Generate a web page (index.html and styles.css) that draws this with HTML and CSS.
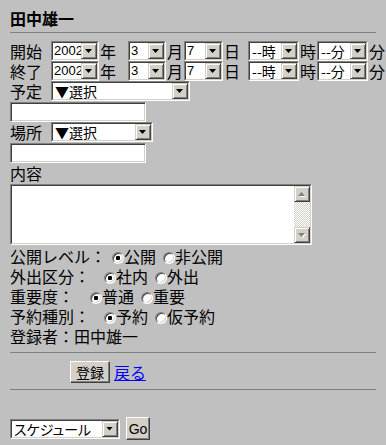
FILE: index.html
```
<!DOCTYPE html>
<html lang="ja">
<head>
<meta charset="utf-8">
<title>スケジュール登録</title>
<link rel="stylesheet" href="styles.css">
</head>
<body>

<h1 class="name">田中雄一</h1>
<hr>

<form>
<div class="row">
	<span>開始</span>
	<span class="dd yr"><select><option>2002</option></select></span><span class="u">年</span>
	<span class="dd mo"><select><option>3</option></select></span><span class="u">月</span>
	<span class="dd dy"><select><option>7</option></select></span><span class="u">日</span>
	<span class="dd hh"><select><option>--時</option></select></span><span class="u">時</span>
	<span class="dd mi"><select><option>--分</option></select></span><span class="u">分</span>
</div>
<div class="row">
	<span>終了</span>
	<span class="dd yr"><select><option>2002</option></select></span><span class="u">年</span>
	<span class="dd mo"><select><option>3</option></select></span><span class="u">月</span>
	<span class="dd dy"><select><option>7</option></select></span><span class="u">日</span>
	<span class="dd hh"><select><option>--時</option></select></span><span class="u">時</span>
	<span class="dd mi"><select><option>--分</option></select></span><span class="u">分</span>
</div>

<div class="row">
	<span>予定</span>
	<span class="dd plan"><select><option>▼選択</option></select></span>
</div>
<input type="text" class="txt">

<div class="row">
	<span>場所</span>
	<span class="dd place"><select><option>▼選択</option></select></span>
</div>
<input type="text" class="txt">

<div class="line">内容</div>
<div class="memo">
	<div class="memo-in">
		<textarea></textarea>
		<div class="sb">
			<div class="sb-btn up"></div>
			<div class="sb-fill"></div>
			<div class="sb-btn down"></div>
		</div>
	</div>
</div>

<div class="line">公開レベル：<input type="radio" name="lv" class="rd r6" checked>公開<input type="radio" name="lv" class="rd">非公開</div>
<div class="line">外出区分：<input type="radio" name="go" class="rd r14" checked>社内<input type="radio" name="go" class="rd">外出</div>
<div class="line">重要度：<input type="radio" name="imp" class="rd r16" checked>普通<input type="radio" name="imp" class="rd">重要</div>
<div class="line">予約種別：<input type="radio" name="kind" class="rd r14" checked>予約<input type="radio" name="kind" class="rd">仮予約</div>
<div class="line">登録者：田中雄一</div>

<hr class="sep">
<div class="act">
	<button type="button" class="btn save">登録</button>
	<a href="#" class="back">戻る</a>
</div>
<hr class="sep">

<div class="jump">
	<span class="dd sched"><select><option>スケジュール</option></select></span>
	<button type="button" class="btn go">Go</button>
</div>
</form>

</body>
</html>
```
FILE: styles.css
```
body{
	margin:0;
	padding:8px 10px 0;
	background:#c0c0c0;
	color:#000;
	font:16px/20px "Noto Sans CJK JP", sans-serif;
}
.name{
	margin:0;
	font-size:16px;
	line-height:20px;
	font-weight:bold;
}
hr{
	border:0;
	border-top:1px solid #808080;
	height:0;
	margin:4px 0 8px;
}
hr.sep{
	margin:6px 0 8px;
}

/* date / select rows */
.row{
	display:flex;
	align-items:center;
	height:20px;
	white-space:nowrap;
}
.row > *{
	flex-shrink:0;
}
.u{
	margin-left:1px;
}
.dd{
	position:relative;
	display:inline-block;
	height:20px;
	box-sizing:border-box;
	border:1px solid;
	border-color:#808080 #fff #fff #808080;
	vertical-align:top;
}
.dd select{
	-webkit-appearance:none;
	appearance:none;
	display:block;
	width:100%;
	height:100%;
	box-sizing:border-box;
	margin:0;
	padding:0 0 0 2px;
	border:1px solid;
	border-color:#404040 #d4d0c8 #d4d0c8 #404040;
	border-radius:0;
	background:#fff;
	color:#000;
	font:14px/16px "Noto Sans CJK JP", sans-serif;
	outline:none;
}
.yr select,
.mo select,
.dy select{
	padding-left:1px;
	font:13px/16px "Liberation Sans", sans-serif;
}
.dd::after{
	content:"";
	position:absolute;
	top:1px;
	right:1px;
	width:16px;
	height:16px;
	box-sizing:border-box;
	background:#d4d0c8;
	border:1px solid;
	border-color:#d4d0c8 #404040 #404040 #d4d0c8;
	box-shadow:inset 1px 1px #fff, inset -1px -1px #808080;
	pointer-events:none;
}
.dd::before{
	content:"";
	position:absolute;
	z-index:1;
	top:7px;
	right:6px;
	width:7px;
	height:4px;
	background:#000;
	clip-path:polygon(0 0,100% 0,50% 100%);
	pointer-events:none;
}
.yr{ width:48px; margin-left:9px; }
.mo{ width:38px; margin-left:12px; }
.dy{ width:39px; margin-left:1px; }
.hh{ width:51px; margin-left:8px; }
.mi{ width:51px; margin-left:1px; }
.plan{ width:139px; margin-left:9px; }
.place{ width:102px; margin-left:9px; }
.sched{ width:110px; }
.sched select{
	font-feature-settings:"palt";
}

.txt{
	display:block;
	width:136px;
	height:20px;
	box-sizing:border-box;
	margin:1px 0 0;
	padding:0 2px;
	border:1px solid;
	border-color:#808080 #fff #fff #808080;
	box-shadow:inset 1px 1px #404040, inset -1px -1px #d4d0c8;
	background:#fff;
	outline:none;
}

.line{
	height:20px;
	white-space:nowrap;
}

/* textarea with old scrollbar */
.memo{
	width:302px;
	height:61px;
	box-sizing:border-box;
	border:1px solid;
	border-color:#808080 #fff #fff #808080;
	margin-top:1px;
	margin-bottom:1px;
}
.memo-in{
	display:flex;
	height:100%;
	box-sizing:border-box;
	border:1px solid;
	border-color:#404040 #d4d0c8 #d4d0c8 #404040;
	background:#fff;
}
.memo textarea{
	flex:1;
	margin:0;
	padding:1px 2px;
	border:0;
	resize:none;
	outline:none;
	font:14px "Noto Sans CJK JP", sans-serif;
}
.sb{
	width:16px;
	display:flex;
	flex-direction:column;
	background:repeating-conic-gradient(#d4d0c8 0 25%, #fff 0 50%) 0 0/2px 2px;
}
.sb-fill{
	flex:1;
}
.sb-btn{
	position:relative;
	height:16px;
	box-sizing:border-box;
	background:#d4d0c8;
	border:1px solid;
	border-color:#d4d0c8 #404040 #404040 #d4d0c8;
	box-shadow:inset 1px 1px #fff, inset -1px -1px #808080;
}
.sb-btn::before,
.sb-btn::after{
	content:"";
	position:absolute;
	left:3px;
	top:5px;
	width:7px;
	height:4px;
}
.sb-btn::after{
	background:#808080;
}
.sb-btn::before{
	left:4px;
	top:6px;
	background:#fff;
}
.up::before,
.up::after{
	clip-path:polygon(50% 0,100% 100%,0 100%);
}
.down::before,
.down::after{
	clip-path:polygon(0 0,100% 0,50% 100%);
}

/* radios */
.rd{
	-webkit-appearance:none;
	appearance:none;
	width:12px;
	height:12px;
	box-sizing:border-box;
	margin:0 0 0 7px;
	vertical-align:-1px;
	border-radius:50%;
	border:1px solid;
	border-color:#808080 #fff #fff #808080;
	box-shadow:inset 1px 1px #404040, inset -1px -1px #d4d0c8;
	background:#fff;
}
.rd:checked{
	background:radial-gradient(circle, #000 0 2px, #fff 2.5px);
}
.r6{ margin-left:6px; }
.r14{ margin-left:14px; }
.r16{ margin-left:16px; }

/* buttons */
.btn{
	margin:0;
	padding:0;
	background:#d4d0c8;
	color:#000;
	border:1px solid;
	border-color:#fff #404040 #404040 #fff;
	box-shadow:inset -1px -1px #808080;
	border-radius:0;
	font:14px "Noto Sans CJK JP", sans-serif;
}
.act{
	display:flex;
	align-items:center;
	padding-left:60px;
	height:22px;
}
.save{
	width:40px;
	height:22px;
}
.back{
	margin-left:4px;
	color:#0000ff;
}
.jump{
	display:flex;
	align-items:center;
	margin-top:27px;
}
.go{
	width:24px;
	height:23px;
	margin-left:6px;
	font-family:"Liberation Sans", sans-serif;
}
```
